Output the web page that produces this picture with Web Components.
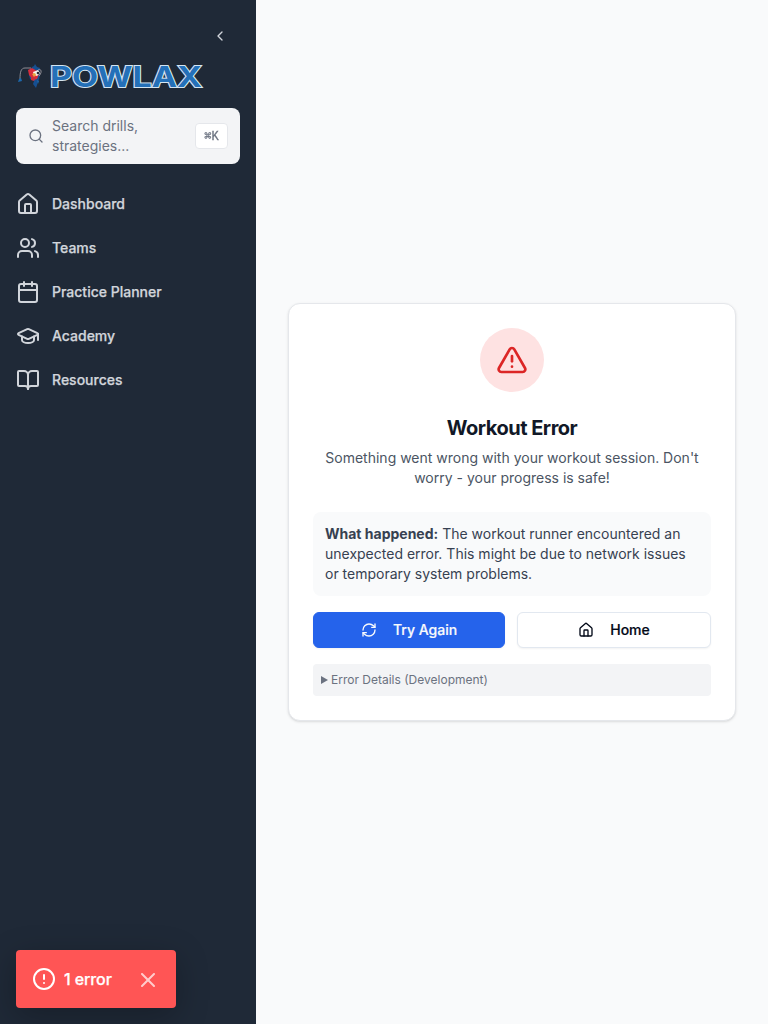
<!DOCTYPE html>
<html lang="en">
<head>
<meta charset="utf-8">
<title>POWLAX</title>
<style>
html,body{margin:0;height:100%}
body{font-family:Inter,"Liberation Sans",sans-serif;background:#f9fafb;overflow:hidden}
</style>
</head>
<body>
<powlax-app></powlax-app>
<script>
const define = (name, html, setup) => {
  const t = document.createElement('template');
  t.innerHTML = html;
  customElements.define(name, class extends HTMLElement {
    constructor() {
      super();
      this.attachShadow({mode: 'open'}).append(t.content.cloneNode(true));
    }
    connectedCallback() { if (setup) setup(this, this.shadowRoot); }
  });
};

const icons = {
  left: '<path d="m15 18-6-6 6-6"/>',
  search: '<circle cx="11" cy="11" r="8"/><path d="m21 21-4.3-4.3"/>',
  house: '<path d="M15 21v-8a1 1 0 0 0-1-1h-4a1 1 0 0 0-1 1v8"/><path d="M3 10a2 2 0 0 1 .709-1.528l7-5.999a2 2 0 0 1 2.582 0l7 5.999A2 2 0 0 1 21 10v9a2 2 0 0 1-2 2H5a2 2 0 0 1-2-2z"/>',
  users: '<path d="M16 21v-2a4 4 0 0 0-4-4H6a4 4 0 0 0-4 4v2"/><circle cx="9" cy="7" r="4"/><path d="M22 21v-2a4 4 0 0 0-3-3.87"/><path d="M16 3.13a4 4 0 0 1 0 7.75"/>',
  calendar: '<path d="M8 2v4"/><path d="M16 2v4"/><rect width="18" height="18" x="3" y="4" rx="2"/><path d="M3 10h18"/>',
  cap: '<path d="M21.42 10.922a1 1 0 0 0-.019-1.838L12.83 5.18a2 2 0 0 0-1.66 0L2.6 9.08a1 1 0 0 0 0 1.832l8.57 3.908a2 2 0 0 0 1.66 0z"/><path d="M22 10v6"/><path d="M6 12.5V16a6 3 0 0 0 12 0v-3.5"/>',
  book: '<path d="M12 7v14"/><path d="M3 18a1 1 0 0 1-1-1V4a1 1 0 0 1 1-1h5a4 4 0 0 1 4 4 4 4 0 0 1 4-4h5a1 1 0 0 1 1 1v13a1 1 0 0 1-1 1h-6a3 3 0 0 0-3 3 3 3 0 0 0-3-3z"/>',
  alert: '<path d="m21.73 18-8-14a2 2 0 0 0-3.48 0l-8 14A2 2 0 0 0 4 21h16a2 2 0 0 0 1.73-3"/><path d="M12 9v4"/><path d="M12 17h.01"/>',
  refresh: '<path d="M3 12a9 9 0 0 1 9-9 9.75 9.75 0 0 1 6.74 2.74L21 8"/><path d="M21 3v5h-5"/><path d="M21 12a9 9 0 0 1-9 9 9.75 9.75 0 0 1-6.74-2.74L3 16"/><path d="M8 16H3v5"/>',
  circle: '<circle cx="12" cy="12" r="10"/><path d="M12 8v4"/><path d="M12 16h.01"/>',
  close: '<path d="M18 6 6 18"/><path d="m6 6 12 12"/>'
};

define('ui-icon', `<style>:host{display:block;flex:none;width:var(--size,24px);height:var(--size,24px)}svg{display:block;width:100%;height:100%}</style>
<svg viewBox="0 0 24 24" fill="none" stroke="currentColor" stroke-width="2" stroke-linecap="round" stroke-linejoin="round"></svg>`,
(el, root) => { root.querySelector('svg').innerHTML = icons[el.getAttribute('name')]; });

define('powlax-logo', `<style>:host{display:block;height:32px}svg{display:block}
text{font-family:Inter,sans-serif;font-weight:700;font-size:28px;fill:#2470b8;stroke:#d5e5f1;stroke-width:2;paint-order:stroke;stroke-linejoin:miter;stroke-miterlimit:3}</style>
<svg width="192" height="32" viewBox="0 0 192 32">
<path d="M16 7l2-1 1-2 2 3 3 1-1 4 1 3-1 4-1 3-2 6-3-4 1-3-4-2-1-4 1-4z" fill="#164f91"/>
<path d="M12 10l4-2 5 3 2 3-2 5-4 1-4-5z" fill="#d72c3d"/>
<path d="M15 17l5 1-2 3-3-1z" fill="#c92f3a"/>
<path d="M17 12l5-2 2 3-3 3-3-1z" fill="#f5f1e9"/><path d="M16 14l3-1 1 2-2 2z" fill="#e7a43c"/><circle cx="22" cy="13" r="1.3" fill="#262a38"/>
<path d="M22 10c4-2 4 3 1 6M15 8L9 8C5 8 4 12 4 19" fill="none" stroke="#a9a4ab" stroke-width=".8"/>
<path d="M3 19l2-1 1 3-4 1zM21 20l1 4 1-3z" fill="#1c68ac"/>
<text x="34" y="26.5" textLength="152" lengthAdjust="spacingAndGlyphs">POWLAX</text>
</svg>`);

define('search-box', `<style>
:host{display:flex;box-sizing:border-box;height:56px;padding:8px 12px;align-items:center;gap:8px;border-radius:8px;background:#f3f4f6;color:#6b7280;font-size:14px;line-height:20px}
ui-icon{--size:16px}span{flex:1}
kbd{box-sizing:border-box;width:33px;height:26px;padding-top:1px;display:flex;align-items:center;justify-content:center;background:#fff;border:1px solid #e5e7eb;border-radius:4px;font:12px/16px "Liberation Mono","DejaVu Sans Mono",monospace;-webkit-text-stroke:.3px #6b7280;will-change:transform}
</style><ui-icon name="search"></ui-icon><span><slot></slot></span><kbd>⌘K</kbd>`);

define('nav-item', `<style>:host{display:flex;height:40px;align-items:center;gap:12px;color:#d1d5db;font-size:14px;font-weight:500;line-height:20px;-webkit-text-stroke:.25px currentColor}</style>
<ui-icon></ui-icon><span><slot></slot></span>`,
(el, root) => root.querySelector('ui-icon').replaceWith(Object.assign(document.createElement('div'), {innerHTML: `<ui-icon name="${el.getAttribute('icon')}"></ui-icon>`})));

define('side-bar', `<style>
:host{display:flex;flex-direction:column;box-sizing:border-box;width:256px;height:100%;padding:28px 16px 16px;background:#1f2937}
.toggle{display:flex;justify-content:flex-end;padding-right:12px;height:32px;color:#d1d5db;--size:16px}
search-box{margin-top:16px}nav{display:flex;flex-direction:column;gap:4px;margin-top:20px}
error-toast{margin-top:auto}
</style>
<div class="toggle"><ui-icon name="left"></ui-icon></div>
<powlax-logo></powlax-logo>
<search-box>Search drills, strategies...</search-box>
<nav><nav-item icon="house">Dashboard</nav-item><nav-item icon="users">Teams</nav-item><nav-item icon="calendar">Practice Planner</nav-item><nav-item icon="cap">Academy</nav-item><nav-item icon="book">Resources</nav-item></nav>
<error-toast>1 error</error-toast>`);

define('error-toast', `<style>
:host{display:flex;box-sizing:border-box;width:160px;height:58px;padding:0 16px;align-items:center;border-radius:4px;background:#ff5555;color:#fff;font-size:16px;font-weight:500;line-height:24px;box-shadow:0 8px 32px rgba(0,0,0,.25);-webkit-text-stroke:.25px currentColor}
span{margin-left:8px;letter-spacing:-.1px;flex:1}.x{opacity:.7;--size:24px;margin-top:2px}
</style><ui-icon name="circle"></ui-icon><span><slot></slot></span><ui-icon class="x" name="close"></ui-icon>`);

define('action-button', `<style>
:host{display:flex;box-sizing:border-box;height:36px;align-items:center;justify-content:center;gap:16px;border:1px solid #e2e8f0;border-radius:6px;background:#fff;color:#020817;font-size:14px;font-weight:500;line-height:20px;box-shadow:0 1px 2px rgba(0,0,0,.05);--size:16px;-webkit-text-stroke:.2px currentColor}
:host([primary]){background:#2563eb;border-color:#2563eb;color:#f8fafc}
</style><slot name="icon"></slot><span><slot></slot></span>`);

define('error-card', `<style>
:host{display:block;box-sizing:border-box;width:448px;height:418px;padding:24px;border:1px solid #e5e7eb;border-radius:12px;background:#fff;box-shadow:0 1px 3px rgba(0,0,0,.1),0 1px 2px -1px rgba(0,0,0,.1)}
.badge{display:flex;align-items:center;justify-content:center;width:64px;height:64px;margin:0 auto 22px;border-radius:50%;background:#fee2e2;color:#dc2626;--size:32px}
h1{margin:0 0 6px;text-align:center;font-size:20px;line-height:28px;font-weight:700;letter-spacing:-.5px;color:#111827}
p{margin:0;font-size:14px;line-height:20px;color:#4b5563;text-align:center}
.info{margin:24px 0 16px;padding:12px;border-radius:8px;background:#f9fafb;color:#374151;text-align:left}
.actions{display:grid;grid-template-columns:192px 194px;gap:12px}
details{margin-top:16px;box-sizing:border-box;height:32px;padding:8px;border-radius:4px;background:#f3f4f6;color:#6b7280;font-size:12px;line-height:16px}
summary{display:flex;align-items:center;gap:3px;list-style:none}
summary::before{content:"";border-left:7px solid currentColor;border-top:4px solid transparent;border-bottom:4px solid transparent}
</style>
<div class="badge"><ui-icon name="alert"></ui-icon></div>
<h1>Workout Error</h1>
<p>Something went wrong with your workout session. Don't worry - your progress is safe!</p>
<p class="info"><strong>What happened:</strong> <span>The workout runner encountered an unexpected error. This might be due to network issues or temporary system problems.</span></p>
<div class="actions"><action-button primary><ui-icon slot="icon" name="refresh"></ui-icon>Try Again</action-button><action-button><ui-icon slot="icon" name="house"></ui-icon>Home</action-button></div>
<details><summary>Error Details (Development)</summary></details>`);

define('powlax-app', `<style>:host{display:grid;grid-template-columns:256px 1fr;height:100vh}main{display:grid;place-items:center}</style>
<side-bar></side-bar><main><error-card></error-card></main>`);
</script>
</body>
</html>
